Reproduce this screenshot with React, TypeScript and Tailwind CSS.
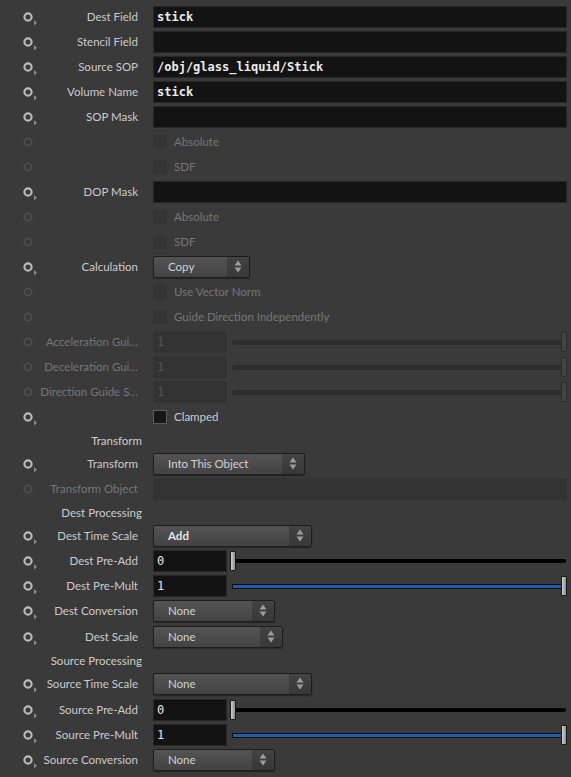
import React from "react";

const ui = "font-['Lato','Noto_Sans',sans-serif]";
const mono = "font-['DejaVu_Sans_Mono','Liberation_Mono',monospace]";

const ParmIcon = ({ active }: { active: boolean }) => (
  <svg width="16" height="20" viewBox="0 0 16 20" className="ml-[22px] shrink-0">
    <circle
      cx="6"
      cy="10"
      r={active ? 3.6 : 3.6}
      fill="none"
      stroke={active ? "#bcbcbc" : "#4f4f4f"}
      strokeWidth={active ? 2.1 : 1.6}
    />
    {active && <path d="M12 13 L15 15.8 L12 18.6 Z" fill="#8a8a8a" />}
  </svg>
);

type RowProps = {
  label?: string;
  icon?: "on" | "off";
  dim?: boolean;
  className?: string;
  children?: React.ReactNode;
};

const Row = ({ label, icon = "on", dim, className = "", children }: RowProps) => (
  <div className={`flex h-[25px] items-center ${className}`}>
    <div className="flex w-[45px] shrink-0 items-center">
      <ParmIcon active={icon === "on"} />
    </div>
    <div
      className={`flex w-[93px] shrink-0 justify-end whitespace-nowrap text-[11.5px] ${
        dim ? "text-[#767676]" : "text-[#cacaca]"
      }`}
    >
      <span>{label}</span>
    </div>
    <div className="ml-[15px] mr-[4px] flex min-w-0 flex-1 items-center">{children}</div>
  </div>
);

const Heading = ({ title }: { title: string }) => (
  <div className="flex h-[22px] items-center">
    <div className="w-[142px] whitespace-nowrap pt-[2px] text-right text-[11.5px] text-[#cdcdcd]">
      {title}
    </div>
  </div>
);

const TextField = ({ value, disabled }: { value?: string; disabled?: boolean }) => (
  <div
    className={`h-[22px] flex-1 border px-[3px] text-[12px] font-bold leading-[20px] text-[#ececec] ${mono} ${
      disabled ? "border-[#343434] bg-[#333333]" : "border-[#272727] bg-[#131313]"
    }`}
  >
    {value}
  </div>
);

const UpDown = () => (
  <svg width="8" height="13" viewBox="0 0 8 13">
    <path d="M4 0.5 L7.5 5.5 L0.5 5.5 Z" fill="#9c9c9c" />
    <path d="M4 12.5 L7.5 7.5 L0.5 7.5 Z" fill="#9c9c9c" />
  </svg>
);

const Menu = ({ value, width, bold }: { value: string; width: string; bold?: boolean }) => (
  <div
    className={`flex h-[22px] ${width} overflow-hidden rounded-[2px] border border-[#1d1d1d] bg-gradient-to-b from-[#545454] to-[#434343] shadow-[0_1px_1px_rgba(0,0,0,0.35)]`}
  >
    <span
      className={`flex-1 pl-[14px] text-[11.5px] leading-[19px] ${
        bold ? "font-bold text-[#e4e4e4]" : "text-[#d2d2d2]"
      }`}
    >
      {value}
    </span>
    <span className="flex w-[22px] items-center justify-center bg-gradient-to-b from-[#434343] to-[#383838]">
      <UpDown />
    </span>
  </div>
);

const Check = ({ label, active }: { label: string; active?: boolean }) => (
  <div className="flex items-center">
    <span
      className={`h-[14px] w-[14px] shrink-0 ${
        active ? "border border-[#5c5c5c] bg-[#171717]" : "border border-[#353535] bg-[#353535]"
      }`}
    />
    <span
      className={`ml-[7px] whitespace-nowrap text-[11.5px] ${
        active ? "text-[#cacaca]" : "text-[#767676]"
      }`}
    >
      {label}
    </span>
  </div>
);

const Slider = ({ value, at, disabled }: { value: string; at: "min" | "max"; disabled?: boolean }) => {
  const handle = disabled
    ? "border border-[#2c2c2c] bg-[#444444]"
    : "border border-[#1a1a1a] bg-gradient-to-r from-[#d0d0d0] to-[#8c8c8c]";
  return (
    <>
      <div
        className={`h-[22px] w-[74px] shrink-0 border px-[3px] text-[12px] leading-[20px] ${mono} ${
          disabled
            ? "border-[#343434] bg-[#333333] text-[#535353]"
            : "border-[#272727] bg-[#131313] text-[#e6e6e6]"
        }`}
      >
        {value}
      </div>
      <div className="relative ml-[3px] h-[22px] flex-1">
        {disabled ? (
          <div className="absolute left-[2px] right-[1px] top-[9px] h-[5px] rounded-full bg-[#2e2e2e]" />
        ) : at === "min" ? (
          <div className="absolute left-[4px] right-[1px] top-[9px] h-[4px] rounded-full bg-black" />
        ) : (
          <div className="absolute left-[2px] right-[4px] top-[9px] h-[5px] border border-[#0b0b0b] bg-[#1f5cab]" />
        )}
        <div
          className={`absolute top-[1px] h-[20px] w-[6px] rounded-[1px] ${handle} ${
            at === "min" ? "left-0" : "right-0"
          }`}
        />
      </div>
    </>
  );
};

export default function App() {
  return (
    <div className={`min-h-screen w-full bg-[#3a3a3a] pt-[4px] ${ui}`}>
      <Row label="Dest Field">
        <TextField value="stick" />
      </Row>
      <Row label="Stencil Field">
        <TextField />
      </Row>
      <Row label="Source SOP">
        <TextField value="/obj/glass_liquid/Stick" />
      </Row>
      <Row label="Volume Name">
        <TextField value="stick" />
      </Row>
      <Row label="SOP Mask">
        <TextField />
      </Row>
      <Row icon="off">
        <Check label="Absolute" />
      </Row>
      <Row icon="off">
        <Check label="SDF" />
      </Row>
      <Row label="DOP Mask">
        <TextField />
      </Row>
      <Row icon="off">
        <Check label="Absolute" />
      </Row>
      <Row icon="off">
        <Check label="SDF" />
      </Row>
      <Row label="Calculation">
        <Menu value="Copy" width="w-[97px]" />
      </Row>
      <Row icon="off">
        <Check label="Use Vector Norm" />
      </Row>
      <Row icon="off">
        <Check label="Guide Direction Independently" />
      </Row>
      <Row icon="off" dim label="Acceleration Gui…">
        <Slider value="1" at="max" disabled />
      </Row>
      <Row icon="off" dim label="Deceleration Gui…">
        <Slider value="1" at="max" disabled />
      </Row>
      <Row icon="off" dim label="Direction Guide S…">
        <Slider value="1" at="max" disabled />
      </Row>
      <Row>
        <Check label="Clamped" active />
      </Row>

      <Heading title="Transform" />
      <Row label="Transform">
        <Menu value="Into This Object" width="w-[152px]" />
      </Row>
      <Row icon="off" dim label="Transform Object">
        <TextField disabled />
      </Row>

      <Heading title="Dest Processing" />
      <Row label="Dest Time Scale">
        <Menu value="Add" width="w-[159px]" bold />
      </Row>
      <Row label="Dest Pre-Add">
        <Slider value="0" at="min" />
      </Row>
      <Row label="Dest Pre-Mult">
        <Slider value="1" at="max" />
      </Row>
      <Row label="Dest Conversion">
        <Menu value="None" width="w-[122px]" />
      </Row>
      <Row label="Dest Scale" className="mt-px">
        <Menu value="None" width="w-[130px]" />
      </Row>

      <Heading title="Source Processing" />
      <Row label="Source Time Scale">
        <Menu value="None" width="w-[159px]" />
      </Row>
      <Row label="Source Pre-Add" className="mt-px">
        <Slider value="0" at="min" />
      </Row>
      <Row label="Source Pre-Mult">
        <Slider value="1" at="max" />
      </Row>
      <Row label="Source Conversion">
        <Menu value="None" width="w-[122px]" />
      </Row>
    </div>
  );
}
